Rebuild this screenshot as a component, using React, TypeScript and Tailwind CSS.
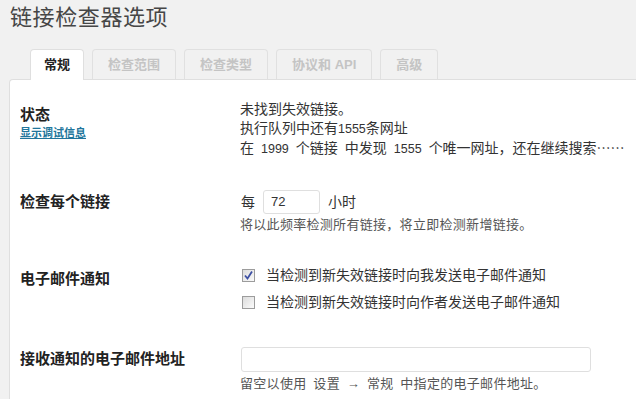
const tabs = [
  { label: "常规", active: true },
  { label: "检查范围" },
  { label: "检查类型" },
  { label: "协议和 API" },
  { label: "高级" },
];

function Checkbox({ checked }: { checked?: boolean }) {
  return (
    <span className="relative inline-block w-[13px] h-[13px] border border-[#9c9c9c] bg-gradient-to-br from-[#dcdcdc] to-[#fbfbfb] shrink-0">
      {checked && (
        <svg viewBox="0 0 13 13" className="absolute -left-px -top-px w-[13px] h-[13px]">
          <path d="M3 6.5 L5.5 9.5 L10 2.5" fill="none" stroke="#3d4fa3" strokeWidth="1.8" />
        </svg>
      )}
    </span>
  );
}

const Num = ({ children }: { children: string }) => (
  <span className="text-[12.5px] text-[#333]">{children}</span>
);

export default function App() {
  return (
    <div className="min-h-screen bg-[#f1f1f1] font-['Liberation_Sans','Noto_Sans_CJK_SC',sans-serif] text-[#333] overflow-hidden">
      <h1 className="pl-[10px] text-[22px] leading-[35px] tracking-[0.6px] text-[#464646] font-normal">
        链接检查器选项
      </h1>

      <div className="mt-[14px] pl-[30px] flex items-end gap-2 h-[30px]">
        {tabs.map((t) =>
          t.active ? (
            <div
              key={t.label}
              className="relative z-10 -mb-px h-[31px] px-[13px] flex items-center bg-white border border-b-0 border-[#dfdfdf] rounded-t-[4px] text-[13px] font-bold text-[#222]"
            >
              {t.label}
            </div>
          ) : (
            <div
              key={t.label}
              className="h-[30px] px-[15px] flex items-center whitespace-nowrap border border-b-0 border-[#e0e0e0] rounded-t-[4px] text-[13px] font-bold text-[#c4c4c4]"
            >
              {t.label}
            </div>
          )
        )}
      </div>

      <div className="ml-[9px] bg-white border-l border-t border-[#dfdfdf] rounded-tl-[4px] pl-[10px] min-h-[330px]">
        {/* 状态 */}
        <div className="flex">
          <div className="w-[220px] shrink-0 pt-[25px]">
            <div className="text-[15px] leading-[20px] font-bold text-[#222]">状态</div>
            <a className="block mt-[1px] text-[11px] leading-[14px] font-bold text-[#21759b] underline">
              显示调试信息
            </a>
          </div>
          <div className="pt-[20px] text-[14px] leading-[19px] whitespace-nowrap">
            <div>未找到失效链接。</div>
            <div>
              执行队列中还有<Num>1555</Num>条网址
            </div>
            <div>
              在{"\u2002"}<Num>1999</Num>{"\u2002"}个链接{"\u2002"}中发现{"\u2002"}
              <Num>1555</Num>{"\u2002"}个唯一网址，还在继续搜索⋯⋯
            </div>
          </div>
        </div>

        {/* 检查每个链接 */}
        <div className="flex pt-[31px]">
          <div className="w-[220px] shrink-0 pt-[2px] text-[15px] leading-[20px] font-bold text-[#222]">检查每个链接</div>
          <div>
            <div className="flex items-center h-[24px] text-[14px]">
              <span className="pl-px">每</span>
              <div className="ml-[8px] w-[57px] h-[24px] border border-[#dfdfdf] rounded-[3px] flex items-center pl-[7px] text-[13px] text-[#333]">
                72
              </div>
              <span className="ml-[8px]">小时</span>
            </div>
            <div className="mt-[2px] text-[13px] leading-[18px] tracking-[0.3px] text-[#555] whitespace-nowrap">
              将以此频率检测所有链接，将立即检测新增链接。
            </div>
          </div>
        </div>

        {/* 电子邮件通知 */}
        <div className="flex pt-[31px]">
          <div className="w-[220px] shrink-0 pt-[4px] text-[15px] leading-[20px] font-bold text-[#222]">电子邮件通知</div>
          <div className="text-[14px] leading-[20px] whitespace-nowrap">
            <label className="flex items-center h-[20px] pl-[2px]">
              <Checkbox checked />
              <span className="ml-[11px]">当检测到新失效链接时向我发送电子邮件通知</span>
            </label>
            <label className="flex items-center h-[20px] pl-[2px] mt-[7px]">
              <Checkbox />
              <span className="ml-[11px]">当检测到新失效链接时向作者发送电子邮件通知</span>
            </label>
          </div>
        </div>

        {/* 接收通知的电子邮件地址 */}
        <div className="flex pt-[35px]">
          <div className="w-[220px] shrink-0 pt-[2px] text-[15px] leading-[20px] font-bold text-[#222] whitespace-nowrap">接收通知的电子邮件地址</div>
          <div>
            <div className="ml-px w-[350px] h-[25px] border border-[#dfdfdf] rounded-[3px] bg-white" />
            <div className="mt-[3px] text-[13px] leading-[18px] tracking-[0.3px] text-[#555] whitespace-nowrap">
              留空以使用{"\u2002"}设置{"\u2002"}→{"\u2002"}常规{"\u2002"}中指定的电子邮件地址。
            </div>
          </div>
        </div>
      </div>
    </div>
  );
}
